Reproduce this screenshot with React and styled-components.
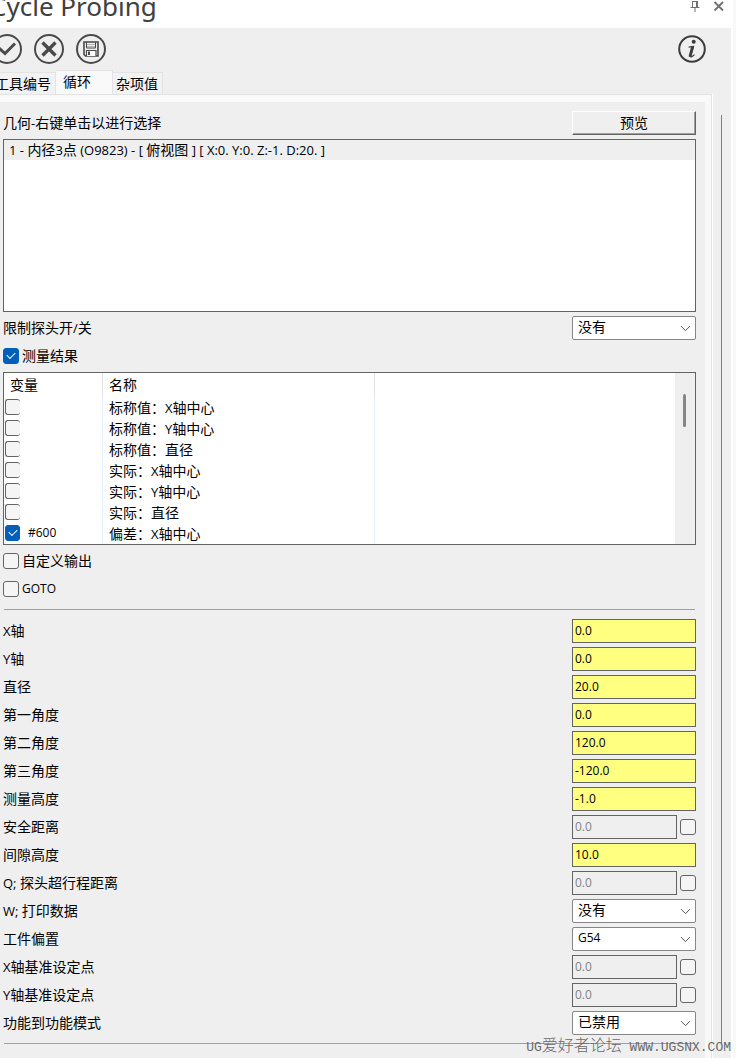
import React from "react";
import styled, { createGlobalStyle } from "styled-components";
import { ChevronDown } from "lucide-react";

const colors = {
  face: "#efefef",
  light: "#f9f9f9",
  line: "#e3e3e3",
  border: "#646464",
  yellow: "#ffff80",
  accent: "#005fb8",
  icon: "#4a4a4a",
};

const GlobalStyle = createGlobalStyle`
  *, *::before, *::after {
    box-sizing: border-box;
  }
  body {
    margin: 0;
    overflow-x: hidden;
    background: ${colors.face};
    color: #000;
    font-family: "Open Sans", "Noto Sans CJK SC", sans-serif;
    font-size: 14px;
    line-height: 20px;
  }
  button, input, select {
    font: inherit;
    color: inherit;
    margin: 0;
  }
`;

/* docked panel, its left edge runs off the screen */
const Window = styled.div`
  position: relative;
  display: flex;
  flex-direction: column;
  min-height: 100vh;
  margin-left: -8px;
  border-right: 3px solid #f8f8f8;
`;

const Body = styled.div`
  display: flex;
  flex-direction: column;
  flex: 1;
  border-right: 2px solid #fff;
`;

const TitleBar = styled.header`
  display: flex;
  align-items: center;
  justify-content: space-between;
  padding-right: 6px;
  padding-bottom: 16px;
  background: #fff;
`;

const Title = styled.h1`
  margin: 0 0 0 -2px;
  font-family: "Noto Sans", sans-serif;
  font-size: 26px;
  font-weight: 400;
  line-height: 12px;
  color: #404040;
`;

const Group = styled.div`
  display: flex;
  align-items: center;
  gap: 12px;
`;

const IconButton = styled.button`
  display: flex;
  padding: 0;
  background: none;
  border: none;
  color: ${(props) => props.$color || colors.icon};
`;

const Toolbar = styled.div`
  display: flex;
  align-items: center;
  justify-content: space-between;
  height: 42px;
  padding-right: 25px;
`;

const Tabs = styled.nav`
  display: flex;
  align-items: flex-end;
  height: 24px;
`;

const Tab = styled.button`
  height: ${(props) => (props.$active ? 24 : 22)}px;
  min-width: ${(props) => (props.$active ? 57 : 50)}px;
  padding: ${(props) => (props.$active ? "0 7px 1px" : "1px 4px 0 3px")};
  text-align: left;
  white-space: nowrap;
  background: ${(props) => (props.$active ? colors.light : "#f2f2f2")};
  border: solid ${colors.line};
  border-width: 1px 1px 0 0;
`;

const Main = styled.div`
  display: flex;
  flex: 1;
`;

const TabPanel = styled.main`
  flex: 1;
  min-width: 0;
  padding: 14px 15px 0 11px;
  border-top: 1px solid ${colors.line};
  border-right: 1px solid ${colors.line};
  box-shadow: inset 0 7px ${colors.light}, inset -6px 0 ${colors.light}, 1px 0 #fff;
`;

const Gutter = styled.div`
  display: flex;
  width: 19px;
  padding: 21px 9px 14px;
`;

const GutterLine = styled.div`
  width: 1px;
  background: #808080;
`;

const Row = styled.div`
  display: flex;
  align-items: center;
  justify-content: space-between;
  height: 28px;
`;

const Controls = styled.div`
  display: flex;
  align-items: center;
  gap: 3px;
  width: 124px;
`;

const Latin = styled.span`
  font-size: ${(props) => (props.$small ? 12 : 13)}px;
  line-height: 1;
`;

const PushButton = styled.button`
  width: 124px;
  height: 24px;
  padding: 0;
  line-height: 20px;
  background: ${colors.face};
  border: 1px solid;
  border-color: #fff ${colors.border} ${colors.border} #fff;
  box-shadow: inset -1px -1px #a0a0a0;
`;

const ListBox = styled.ul`
  min-height: 173px;
  margin: 2px 0;
  padding: 0;
  list-style: none;
  background: #fff;
  border: 1px solid ${colors.border};
`;

const ListItem = styled.li`
  padding: 0 5px;
  background: ${colors.face};
`;

const SelectBox = styled.div`
  position: relative;
  width: 124px;
  height: 24px;
  svg {
    position: absolute;
    top: 4px;
    right: 2px;
    pointer-events: none;
    color: #505050;
  }
`;

const SelectInput = styled.select`
  width: 100%;
  height: 24px;
  padding: 0 20px 2px 5px;
  appearance: none;
  font-size: ${(props) => (props.$latin ? 12 : 14)}px;
  background: #fff;
  border: 1px solid #868686;
  border-radius: 2px;
`;

const Check = styled.input.attrs({ type: "checkbox" })`
  position: relative;
  flex: none;
  width: 16px;
  height: 16px;
  appearance: none;
  background: #f5f5f5;
  border: 1px solid ${colors.border};
  border-radius: 3px;
  &:checked {
    background: ${colors.accent};
    border-color: ${colors.accent};
  }
  &:checked::after {
    content: "";
    position: absolute;
    top: 3px;
    left: 3px;
    width: 8px;
    height: 5px;
    border: solid #fff;
    border-width: 0 0 1px 1px;
    transform: rotate(-45deg);
  }
`;

const CellCheck = styled(Check)`
  width: 15px;
  border-right-width: ${(props) => (props.defaultChecked ? 1 : 0)}px;
`;

const CheckLabel = styled.label`
  display: flex;
  align-items: center;
  gap: 3px;
`;

const TableBox = styled.div`
  display: flex;
  margin: 2px 0;
  background: #fff;
  border: 1px solid ${colors.border};
`;

const Table = styled.table`
  flex: 1;
  table-layout: fixed;
  border-spacing: 0;
  th, td {
    height: 21px;
    padding: 1px 6px 0;
    text-align: left;
    font-weight: 400;
    border-right: 1px solid #e5effa;
  }
  th {
    height: 24px;
    padding-top: 0;
    border-color: ${colors.line};
  }
  td:first-child {
    padding: 0 0 1px 1px;
  }
  th:last-child, td:last-child {
    border-right: none;
  }
`;

const Col = styled.col`
  width: ${(props) => props.$width}px;
`;

const Variable = styled.div`
  display: flex;
  align-items: center;
  gap: 8px;
  height: 20px;
`;

const ScrollTrack = styled.div`
  width: 20px;
  padding: 21px 8px;
  background: ${colors.face};
`;

const ScrollThumb = styled.div`
  height: 33px;
  width: 3px;
  border-radius: 2px;
  background: #868686;
`;

const Divider = styled.hr`
  height: 1px;
  margin: 6px 1px 7px;
  border: none;
  background: #a0a0a0;
`;

const TextInput = styled.input`
  flex: 1;
  min-width: 0;
  height: 24px;
  padding: 0 2px 1px;
  font-size: 12px;
  background: ${colors.yellow};
  border: 1px solid ${colors.border};
  border-radius: 0;
  &:disabled {
    color: #838383;
    background: ${colors.face};
  }
`;

const Watermark = styled.div`
  position: absolute;
  right: 2px;
  bottom: 0;
  font-family: "Liberation Mono", "Noto Sans CJK SC", monospace;
  font-size: 16px;
  font-weight: 300;
  color: #6a6a6a;
  pointer-events: none;
  span {
    font-size: 13px;
  }
`;

const variables = [
  { name: "标称值：X轴中心" },
  { name: "标称值：Y轴中心" },
  { name: "标称值：直径" },
  { name: "实际：X轴中心" },
  { name: "实际：Y轴中心" },
  { name: "实际：直径" },
  { name: "偏差：X轴中心", id: "#600" },
];

const fields = [
  { label: "X轴", value: "0.0" },
  { label: "Y轴", value: "0.0" },
  { label: "直径", value: "20.0" },
  { label: "第一角度", value: "0.0" },
  { label: "第二角度", value: "120.0" },
  { label: "第三角度", value: "-120.0" },
  { label: "测量高度", value: "-1.0" },
  { label: "安全距离", value: "0.0", optional: true },
  { label: "间隙高度", value: "10.0" },
  { label: "Q; 探头超行程距离", value: "0.0", optional: true },
  { label: "W; 打印数据", value: "没有", select: true },
  { label: "工件偏置", value: "G54", select: true, latin: true },
  { label: "X轴基准设定点", value: "0.0", optional: true },
  { label: "Y轴基准设定点", value: "0.0", optional: true },
  { label: "功能到功能模式", value: "已禁用", select: true },
];

// Latin runs are set smaller than the Chinese around them
const Mixed = ({ children }) => (
  <span>
    {children
      .split(/([\x20-\x7e]+)/)
      .map((part, i) => (i % 2 ? <Latin key={i}>{part}</Latin> : part))}
  </span>
);

const Select = ({ id, value, latin }) => (
  <SelectBox>
    <SelectInput id={id} defaultValue={value} $latin={latin}>
      <option>{value}</option>
    </SelectInput>
    <ChevronDown size={17} strokeWidth={1.4} />
  </SelectBox>
);

const Field = ({ id, field }) => (
  <Row>
    <label htmlFor={id}>
      <Mixed>{field.label}</Mixed>
    </label>
    {field.select ? (
      <Select id={id} value={field.value} latin={field.latin} />
    ) : (
      <Controls>
        <TextInput id={id} defaultValue={field.value} disabled={field.optional} />
        {field.optional && <Check aria-label={field.label} />}
      </Controls>
    )}
  </Row>
);

const Ring = ({ children }) => (
  <svg width="30" height="30" viewBox="0 0 30 30" fill="none" stroke="currentColor">
    <circle cx="15" cy="15" r="14" strokeWidth="2" />
    {children}
  </svg>
);

export default function App() {
  return (
    <>
      <GlobalStyle />
      <Window>
        <Body>
          <TitleBar>
            <Title>Cycle Probing</Title>
            <Group>
              <IconButton aria-label="固定" $color="#707070">
                <svg width="12" height="12" viewBox="0 0 12 12" fill="none" stroke="currentColor">
                  <path d="M3.5 1V7M3 1.5H9M1.5 7.5H10.5M6 8V12" />
                  <path d="M8 1V7" strokeWidth="2" />
                </svg>
              </IconButton>
              <IconButton aria-label="关闭" $color="#707070">
                <svg width="12" height="12" viewBox="0 0 12 12" fill="none" stroke="currentColor">
                  <path d="M1.5 2L10 10.5M10 2L1.5 10.5" strokeWidth="1.8" />
                </svg>
              </IconButton>
            </Group>
          </TitleBar>

          <Toolbar>
            <Group>
              <IconButton aria-label="确定">
                <Ring>
                  <path d="M7 14L13 19.5L23 9.5" strokeWidth="3" />
                </Ring>
              </IconButton>
              <IconButton aria-label="取消">
                <Ring>
                  <path d="M8.5 8.5L21.5 21.5M21.5 8.5L8.5 21.5" strokeWidth="3.4" />
                </Ring>
              </IconButton>
              <IconButton aria-label="保存">
                <Ring>
                  <path d="M8 8H22V22H9.5L8 20.5Z" strokeWidth="1.6" />
                  <path d="M10.5 8V14H19.5V8" strokeWidth="1" />
                  <path d="M11 10.5H19M11 12.5H19" strokeWidth="1" opacity="0.35" />
                  <path d="M10.5 22V16.5H20V22" strokeWidth="1.2" fill="#fff" />
                  <path d="M13 17.5V21" strokeWidth="2" />
                </Ring>
              </IconButton>
            </Group>
            <IconButton aria-label="信息">
              <svg width="28" height="28" viewBox="0 0 28 28" fill="none" stroke="#3c3c3c">
                <circle cx="14" cy="14" r="12.8" strokeWidth="2" />
                <circle cx="15.7" cy="6.8" r="2" fill="#3c3c3c" stroke="none" />
                <path d="M10.6 12.2L15.5 11.4L12.4 21.6Q13 23 16.4 19.6" strokeWidth="1.2" />
                <path d="M14.6 11.6L11.9 21.8" strokeWidth="2.8" />
              </svg>
            </IconButton>
          </Toolbar>

          <Tabs>
            <Tab>工具编号</Tab>
            <Tab $active>循环</Tab>
            <Tab>杂项值</Tab>
          </Tabs>

          <Main>
            <TabPanel>
              <Row>
                <Mixed>几何-右键单击以进行选择</Mixed>
                <PushButton>预览</PushButton>
              </Row>
              <ListBox>
                <ListItem>
                  <Mixed>1 - 内径3点 (O9823) - [ 俯视图 ] [ X:0. Y:0. Z:-1. D:20. ]</Mixed>
                </ListItem>
              </ListBox>
              <Row>
                <label htmlFor="limit">
                  <Mixed>限制探头开/关</Mixed>
                </label>
                <Select id="limit" value="没有" />
              </Row>
              <Row>
                <CheckLabel>
                  <Check defaultChecked />
                  测量结果
                </CheckLabel>
              </Row>
              <TableBox>
                <Table>
                  <colgroup>
                    <Col $width={99} />
                    <Col $width={272} />
                    <col />
                  </colgroup>
                  <thead>
                    <tr>
                      <th>变量</th>
                      <th>名称</th>
                      <th />
                    </tr>
                  </thead>
                  <tbody>
                    {variables.map((item) => (
                      <tr key={item.name}>
                        <td>
                          <Variable>
                            <CellCheck aria-label={item.name} defaultChecked={Boolean(item.id)} />
                            {item.id && <Latin $small>{item.id}</Latin>}
                          </Variable>
                        </td>
                        <td>
                          <Mixed>{item.name}</Mixed>
                        </td>
                        <td />
                      </tr>
                    ))}
                  </tbody>
                </Table>
                <ScrollTrack>
                  <ScrollThumb />
                </ScrollTrack>
              </TableBox>
              <Row>
                <CheckLabel>
                  <Check />
                  自定义输出
                </CheckLabel>
              </Row>
              <Row>
                <CheckLabel>
                  <Check />
                  <Latin $small>GOTO</Latin>
                </CheckLabel>
              </Row>
              <Divider />
              {fields.map((field, i) => (
                <Field key={field.label} id={`field-${i}`} field={field} />
              ))}
              <Divider />
            </TabPanel>
            <Gutter>
              <GutterLine />
            </Gutter>
          </Main>
        </Body>
        <Watermark>
          <span>UG</span>爱好者论坛<span> WWW.UGSNX.COM</span>
        </Watermark>
      </Window>
    </>
  );
}
